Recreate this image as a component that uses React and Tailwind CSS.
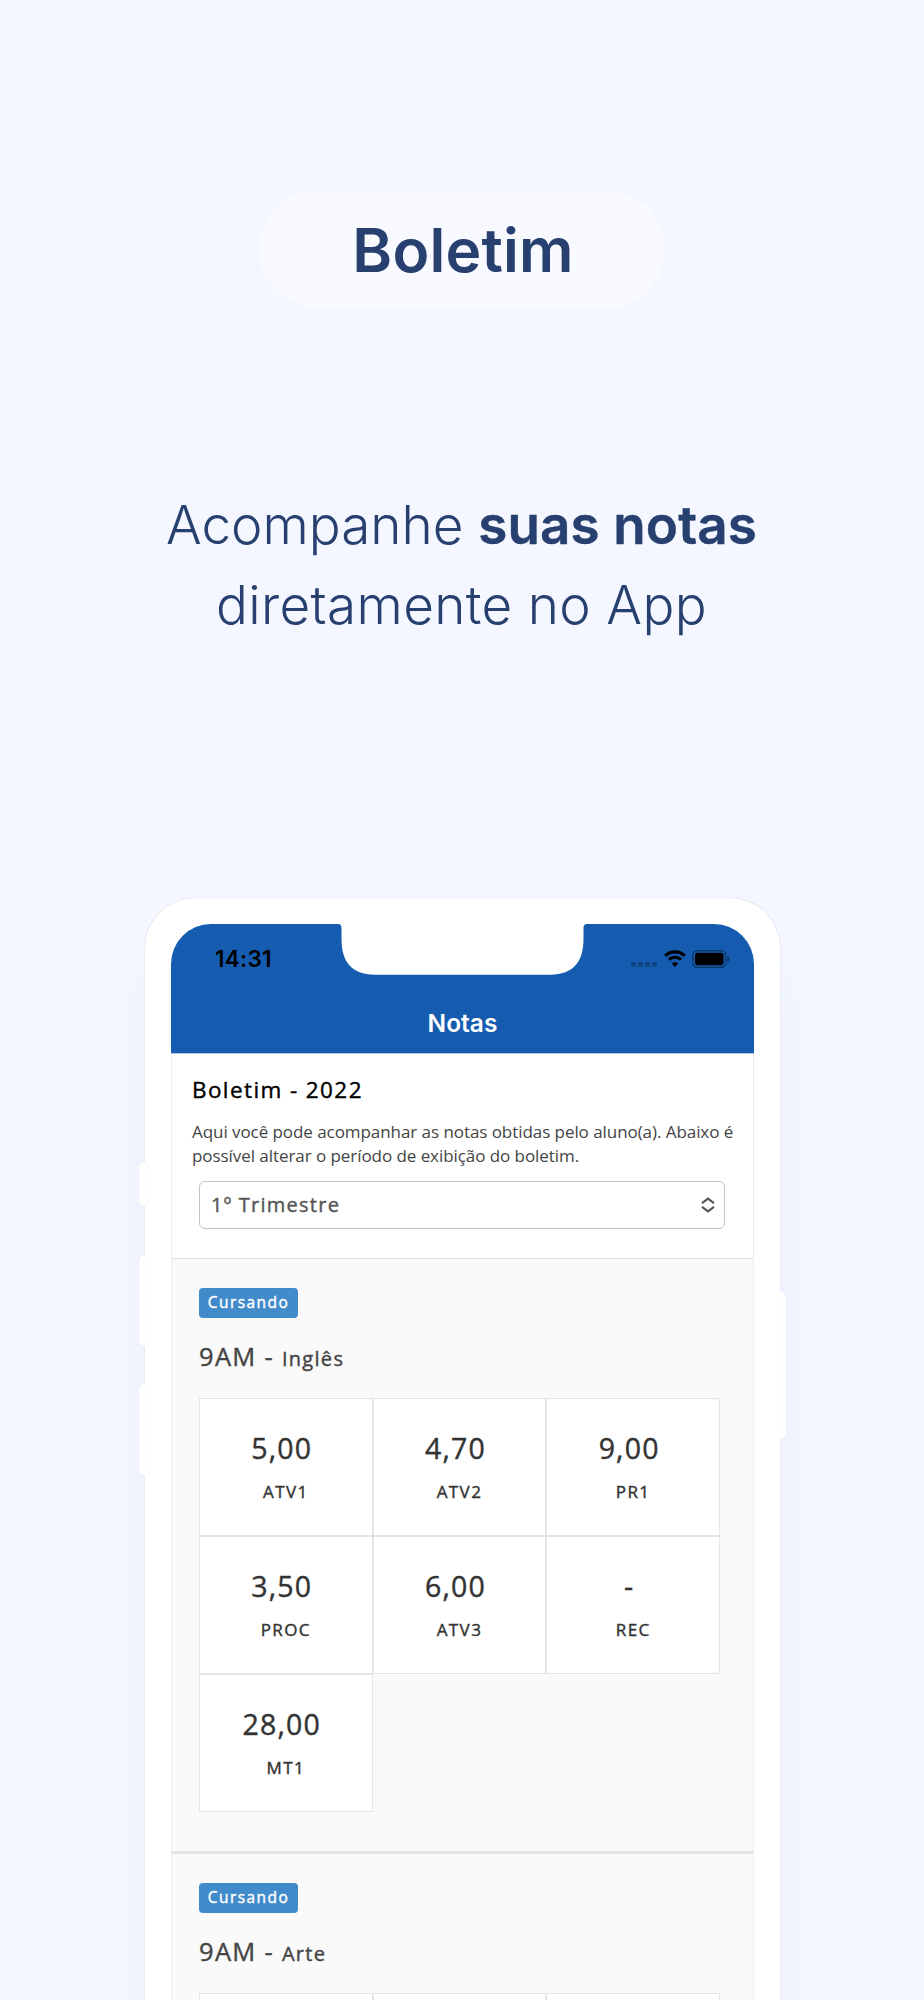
import React from 'react';

const subjects = [
  {
    id: 'ingles',
    code: '9AM',
    name: 'Inglês',
    status: 'Cursando',
    grades: [
      { label: 'ATV1', value: '5,00' },
      { label: 'ATV2', value: '4,70' },
      { label: 'PR1', value: '9,00' },
      { label: 'PROC', value: '3,50' },
      { label: 'ATV3', value: '6,00' },
      { label: 'REC', value: '-' },
      { label: 'MT1', value: '28,00' },
    ],
  },
  {
    id: 'arte',
    code: '9AM',
    name: 'Arte',
    status: 'Cursando',
    grades: [
      { label: '', value: '' },
      { label: '', value: '' },
      { label: '', value: '' },
    ],
  },
];

const WifiIcon = () => (
  <svg width="22" height="17" viewBox="0 0 22 17" fill="none" stroke="#000">
    <path d="M1.2 5.6 C6.8 0.5 15.2 0.5 20.8 5.6" strokeWidth="3.3" />
    <path d="M4.9 9.7 C8.4 6.5 13.6 6.5 17.1 9.7" strokeWidth="3.1" />
    <path d="M11 16.9 L7.8 13.6 C9.6 11.9 12.4 11.9 14.2 13.6 Z" fill="#000" stroke="none" />
  </svg>
);

const BatteryIcon = () => (
  <svg width="38" height="18" viewBox="0 0 38 18" fill="none">
    <rect x="0.8" y="0.7" width="33" height="16.6" rx="4.5" stroke="#000" strokeOpacity="0.4" strokeWidth="1.4" />
    <rect x="3" y="2.8" width="28.6" height="12.4" rx="2.4" fill="#000" />
    <path d="M35.4 6.2 C37.8 7 37.8 11 35.4 11.8 Z" fill="#000" fillOpacity="0.5" />
  </svg>
);

const Notch = () => (
  <svg className="absolute left-[166px] top-[-1px]" width="251" height="53" viewBox="0 0 251 53">
    <path
      d="M0 0 H251 V1 H250 Q246.5 1 246.5 5 V16 C246.5 38 237 51.7 213 51.7 H38 C14 51.7 4.5 38 4.5 16 V5 Q4.5 1 1 1 H0 Z"
      fill="#fff"
    />
  </svg>
);

const StatusBar = () => (
  <div className="flex h-[70px] items-start justify-between pl-[44px] pr-[24px] pt-[26px]">
    <span className="font-[Inter,sans-serif] text-[22.5px] font-semibold leading-[18px] tracking-[0.25px] text-black">
      14:31
    </span>
    <div className="flex items-start">
      <div className="mt-[12px] flex gap-[2px]">
        {[0, 1, 2, 3].map((i) => (
          <span key={i} className="size-[5px] rounded-[1.5px] bg-black/25" />
        ))}
      </div>
      <div className="ml-[7px]">
        <WifiIcon />
      </div>
      <div className="ml-[6px]">
        <BatteryIcon />
      </div>
    </div>
  </div>
);

const GradeCell = ({ label, value }) => (
  <div className="flex h-[138px] flex-col items-center border border-[#e5e5e5] bg-white pt-[29px] text-[#333]">
    <span className="mr-[8px] text-[28.5px] leading-[40px] tracking-[1.2px] [-webkit-text-stroke:0.4px]">{value}</span>
    <span className="mt-[12px] text-[17px] leading-[24px] tracking-[1.4px] [-webkit-text-stroke:0.4px]">{label}</span>
  </div>
);

const Subject = ({ subject }) => (
  <section className="border-b-[3px] border-[#e4e4e4] px-[27px] pb-[39px] pt-[29px]">
    <span className="flex h-[30px] w-[99px] items-center justify-center rounded-[4px] bg-[#428bca] text-[15.5px] tracking-[1.45px] text-white [-webkit-text-stroke:0.4px]">
      {subject.status}
    </span>
    <h3 className="mt-[20px] flex h-[36px] items-baseline whitespace-pre text-[25.5px] leading-[36px] tracking-[1.3px] text-[#444] [-webkit-text-stroke:0.4px]">
      {subject.code} - <span className="text-[20px] tracking-[1.3px]">{subject.name}</span>
    </h3>
    <div className="mt-[24px] grid w-[521px] grid-cols-3">
      {subject.grades.map((grade, i) => (
        <GradeCell key={i} label={grade.label} value={grade.value} />
      ))}
    </div>
  </section>
);

const Phone = () => (
  <div className="relative ml-[145px] mt-[253px] h-[1200px] w-[635px]">
    {/* side buttons */}
    <div className="absolute left-[-6px] top-[264px] h-[44px] w-[8px] rounded-l-[5px] bg-white shadow-[0_0_1px_rgba(0,0,0,0.12)]" />
    <div className="absolute left-[-6px] top-[357px] h-[91px] w-[8px] rounded-l-[5px] bg-white shadow-[0_0_1px_rgba(0,0,0,0.12)]" />
    <div className="absolute left-[-6px] top-[486px] h-[91px] w-[8px] rounded-l-[5px] bg-white shadow-[0_0_1px_rgba(0,0,0,0.12)]" />
    <div className="absolute right-[-6px] top-[394px] h-[147px] w-[8px] rounded-r-[5px] bg-white shadow-[0_0_1px_rgba(0,0,0,0.12)]" />

    <div className="h-full rounded-t-[50px] bg-white px-[26px] pt-[26px] shadow-[0_0_1px_rgba(0,0,0,0.25),0_60px_50px_rgba(90,100,170,0.06)]">
      <div className="relative h-full overflow-hidden rounded-t-[40px] bg-white">
        <header className="h-[130px] border-b border-[#b9c6d8] bg-[#155cb0]">
          <StatusBar />
          <h1 className="text-center font-[Inter,sans-serif] text-[24.5px] font-semibold leading-[58px] text-white">
            Notas
          </h1>
        </header>
        <Notch />

        <div className="h-full border-x border-[#ececec]">
          <div className="h-[205px] border-b border-[#dedede] px-[20px] pt-[19px]">
            <h2 className="text-[22.5px] leading-[34px] tracking-[1.4px] text-black [-webkit-text-stroke:0.4px]">
              Boletim - 2022
            </h2>
            <p className="mt-[13px] whitespace-nowrap text-[17px] leading-[24px] tracking-[-0.06px] text-[#444]">
              Aqui você pode acompanhar as notas obtidas pelo aluno(a). Abaixo é
              <br />
              possível alterar o período de exibição do boletim.
            </p>
            <button className="ml-[7px] mt-[13px] flex h-[48px] w-[526px] items-center justify-between rounded-[6px] border border-[#c4c4c4] bg-white pl-[11px] pr-[9px] text-[20px] tracking-[1.25px] text-[#555] [-webkit-text-stroke:0.4px]">
              1º Trimestre
              <svg width="14" height="16" viewBox="0 0 14 16" fill="none" stroke="#555" strokeWidth="2.1">
                <path d="M1 6.2 L7 1.6 L13 6.2" />
                <path d="M1 9.8 L7 14.4 L13 9.8" />
              </svg>
            </button>
          </div>
          <div className="bg-[#fafafa]">
            {subjects.map((subject) => (
              <Subject key={subject.id} subject={subject} />
            ))}
          </div>
        </div>
      </div>
    </div>
  </div>
);

const App = () => {
  return (
    <div className="h-[2000px] w-[924px] overflow-hidden bg-[#f4f7ff] font-['Open_Sans',sans-serif]">
      <div className="mx-auto mt-[191px] flex h-[117px] w-[406px] items-center justify-center rounded-full bg-[#f9faff] pl-[2px] pt-px font-[Inter,sans-serif] text-[60.5px] font-semibold tracking-[0.2px] text-[#27406f]">
        Boletim
      </div>
      <p className="mt-[177px] pr-px text-center font-[Inter,sans-serif] text-[53px] font-light leading-[80px] text-[#27406f]">
        Acompanhe <b className="font-semibold tracking-[0.1px] [-webkit-text-stroke:0.4px]">suas notas</b>
        <br />
        <span className="tracking-[0.35px]">diretamente no App</span>
      </p>
      <Phone />
    </div>
  );
};

export default App;
